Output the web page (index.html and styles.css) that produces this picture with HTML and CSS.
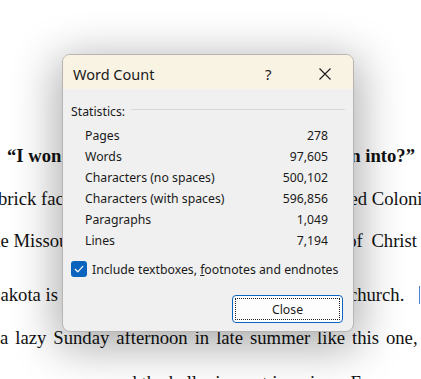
FILE: index.html
```html
<!DOCTYPE html>
<html>
<head>
<meta charset="utf-8">
<link rel="stylesheet" href="styles.css">
</head>
<body>
<div class="page">
  <div class="line heading"><span class="l1">“I wonder</span><span class="r1">drawn into?”</span></div>
  <div class="line"><span class="l2">brick face</span><span class="r2">red Colonial</span></div>
  <div class="line"><span class="l3">the Missouri</span><span class="r3">of Christ</span></div>
  <div class="line para"><span class="l4">Dakota is</span><span class="r4">church. <span class="caret"></span></span></div>
  <div class="line"><span class="l5">a lazy Sunday afternoon in late summer like this one,</span></div>
  <div class="line"><span class="l6">and the bells ring out in unison. Every</span></div>
</div>

<div class="dialog">
  <div class="titlebar">
    <span class="title">Word Count</span>
    <span class="help">?</span>
    <svg class="xicon" width="12" height="12" viewBox="0 0 12 12"><path d="M0.5 0.5 L11.5 11.5 M11.5 0.5 L0.5 11.5" stroke="#1b1b1b" stroke-width="1.1" fill="none"/></svg>
  </div>
  <div class="body">
    <div class="group"><span class="glabel">Statistics:</span><span class="gline"></span></div>
    <div class="rows">
      <div class="row"><span>Pages</span><span>278</span></div>
      <div class="row"><span>Words</span><span>97,605</span></div>
      <div class="row"><span>Characters (no spaces)</span><span>500,102</span></div>
      <div class="row"><span>Characters (with spaces)</span><span>596,856</span></div>
      <div class="row"><span>Paragraphs</span><span>1,049</span></div>
      <div class="row"><span>Lines</span><span>7,194</span></div>
    </div>
    <div class="check">
      <span class="box"><svg width="16" height="16" viewBox="0 0 16 16"><path d="M4.2 8.3 L6.8 10.8 L11.8 5.4" stroke="#fff" stroke-width="1.2" fill="none" stroke-linecap="round" stroke-linejoin="round"/></svg></span>
      <span class="clabel">Include textboxes, <u>f</u>ootnotes and endnotes</span>
    </div>
    <div class="actions">
      <button class="close"><span class="focus">Close</span></button>
    </div>
  </div>
</div>
</body>
</html>
```

FILE: styles.css
```css
html, body {
  margin: 0;
  padding: 0;
  background: #ffffff;
  overflow: hidden;
  width: 421px;
  height: 379px;
}

.page {
  height: 379px;
  overflow: hidden;
  box-sizing: border-box;
  padding-top: 135px;
  font-family: "Liberation Serif", "Times New Roman", serif;
  font-size: 18.67px;
  line-height: 42.7px;
  color: #111;
}

.line {
  display: flex;
  justify-content: space-between;
  white-space: nowrap;
  overflow: hidden;
  height: 42.7px;
}

.para { margin-top: 11px; }

.heading { font-weight: bold; }

.l1 { margin-left: 7px; }
.r1 { margin-right: 6px; }
.l2 { margin-left: -2px; }
.r2 { margin-right: -15px; }
.l3 { margin-left: -14px; }
.r3 { margin-right: 4px; word-spacing: 4px; }
.l4 { margin-left: -13px; }
.r4 { margin-right: 1px; word-spacing: 10px; }
.l5 { margin-left: 0px; word-spacing: 2.3px; }
.l6 { margin-left: 110px; margin-top: 3px; }

.caret {
  display: inline-block;
  width: 1px;
  height: 18px;
  background: #4a7fd0;
  vertical-align: -3px;
}

.dialog {
  position: absolute;
  left: 62px;
  top: 54px;
  width: 290px;
  height: 276px;
  border: 1px solid #b9b4b4;
  border-radius: 8px;
  background: #f0f0f0;
  overflow: hidden;
  box-shadow: 0 10px 45px 6px rgba(0, 0, 0, 0.32);
  font-family: "Noto Sans", "Open Sans", sans-serif;
  font-size: 12.25px;
  color: #1a1a1a;
}

.titlebar {
  height: 34px;
  background: #f9f3e4;
  display: flex;
  align-items: center;
  padding: 3px 0 0 10px;
  box-sizing: border-box;
}

.title {
  font-size: 14.5px;
  width: 192px;
}

.help {
  font-size: 15px;
  width: 54px;
}

.xicon { display: block; }

.body {
  padding: 12px 8px 0 8px;
}

.group {
  display: flex;
  align-items: center;
  height: 20px;
  gap: 6px;
}

.gline {
  flex: 1;
  height: 1px;
  background: #d9d9d9;
  margin-top: -4px;
}

.rows {
  margin-top: 4px;
  padding: 0 17px 0 14px;
}

.row {
  display: flex;
  justify-content: space-between;
  height: 21px;
  line-height: 21px;
}

.check {
  margin-top: 8px;
  display: flex;
  align-items: center;
  height: 20px;
  gap: 5px;
}

.box {
  width: 16px;
  height: 16px;
  border-radius: 3px;
  background: #0a63bd;
  display: block;
}

.box svg { display: block; }

.actions {
  display: flex;
  justify-content: flex-end;
  margin-top: 16px;
  padding-right: 2px;
}

.close {
  width: 111px;
  height: 28px;
  background: #fdfdfd;
  border: 1px solid #0a63bd;
  border-radius: 4px;
  padding: 2px;
  font-family: inherit;
  font-size: 12.25px;
  color: #1a1a1a;
  display: flex;
}

.focus {
  flex: 1;
  border: 1px dotted #222;
  display: flex;
  align-items: center;
  justify-content: center;
}
```
